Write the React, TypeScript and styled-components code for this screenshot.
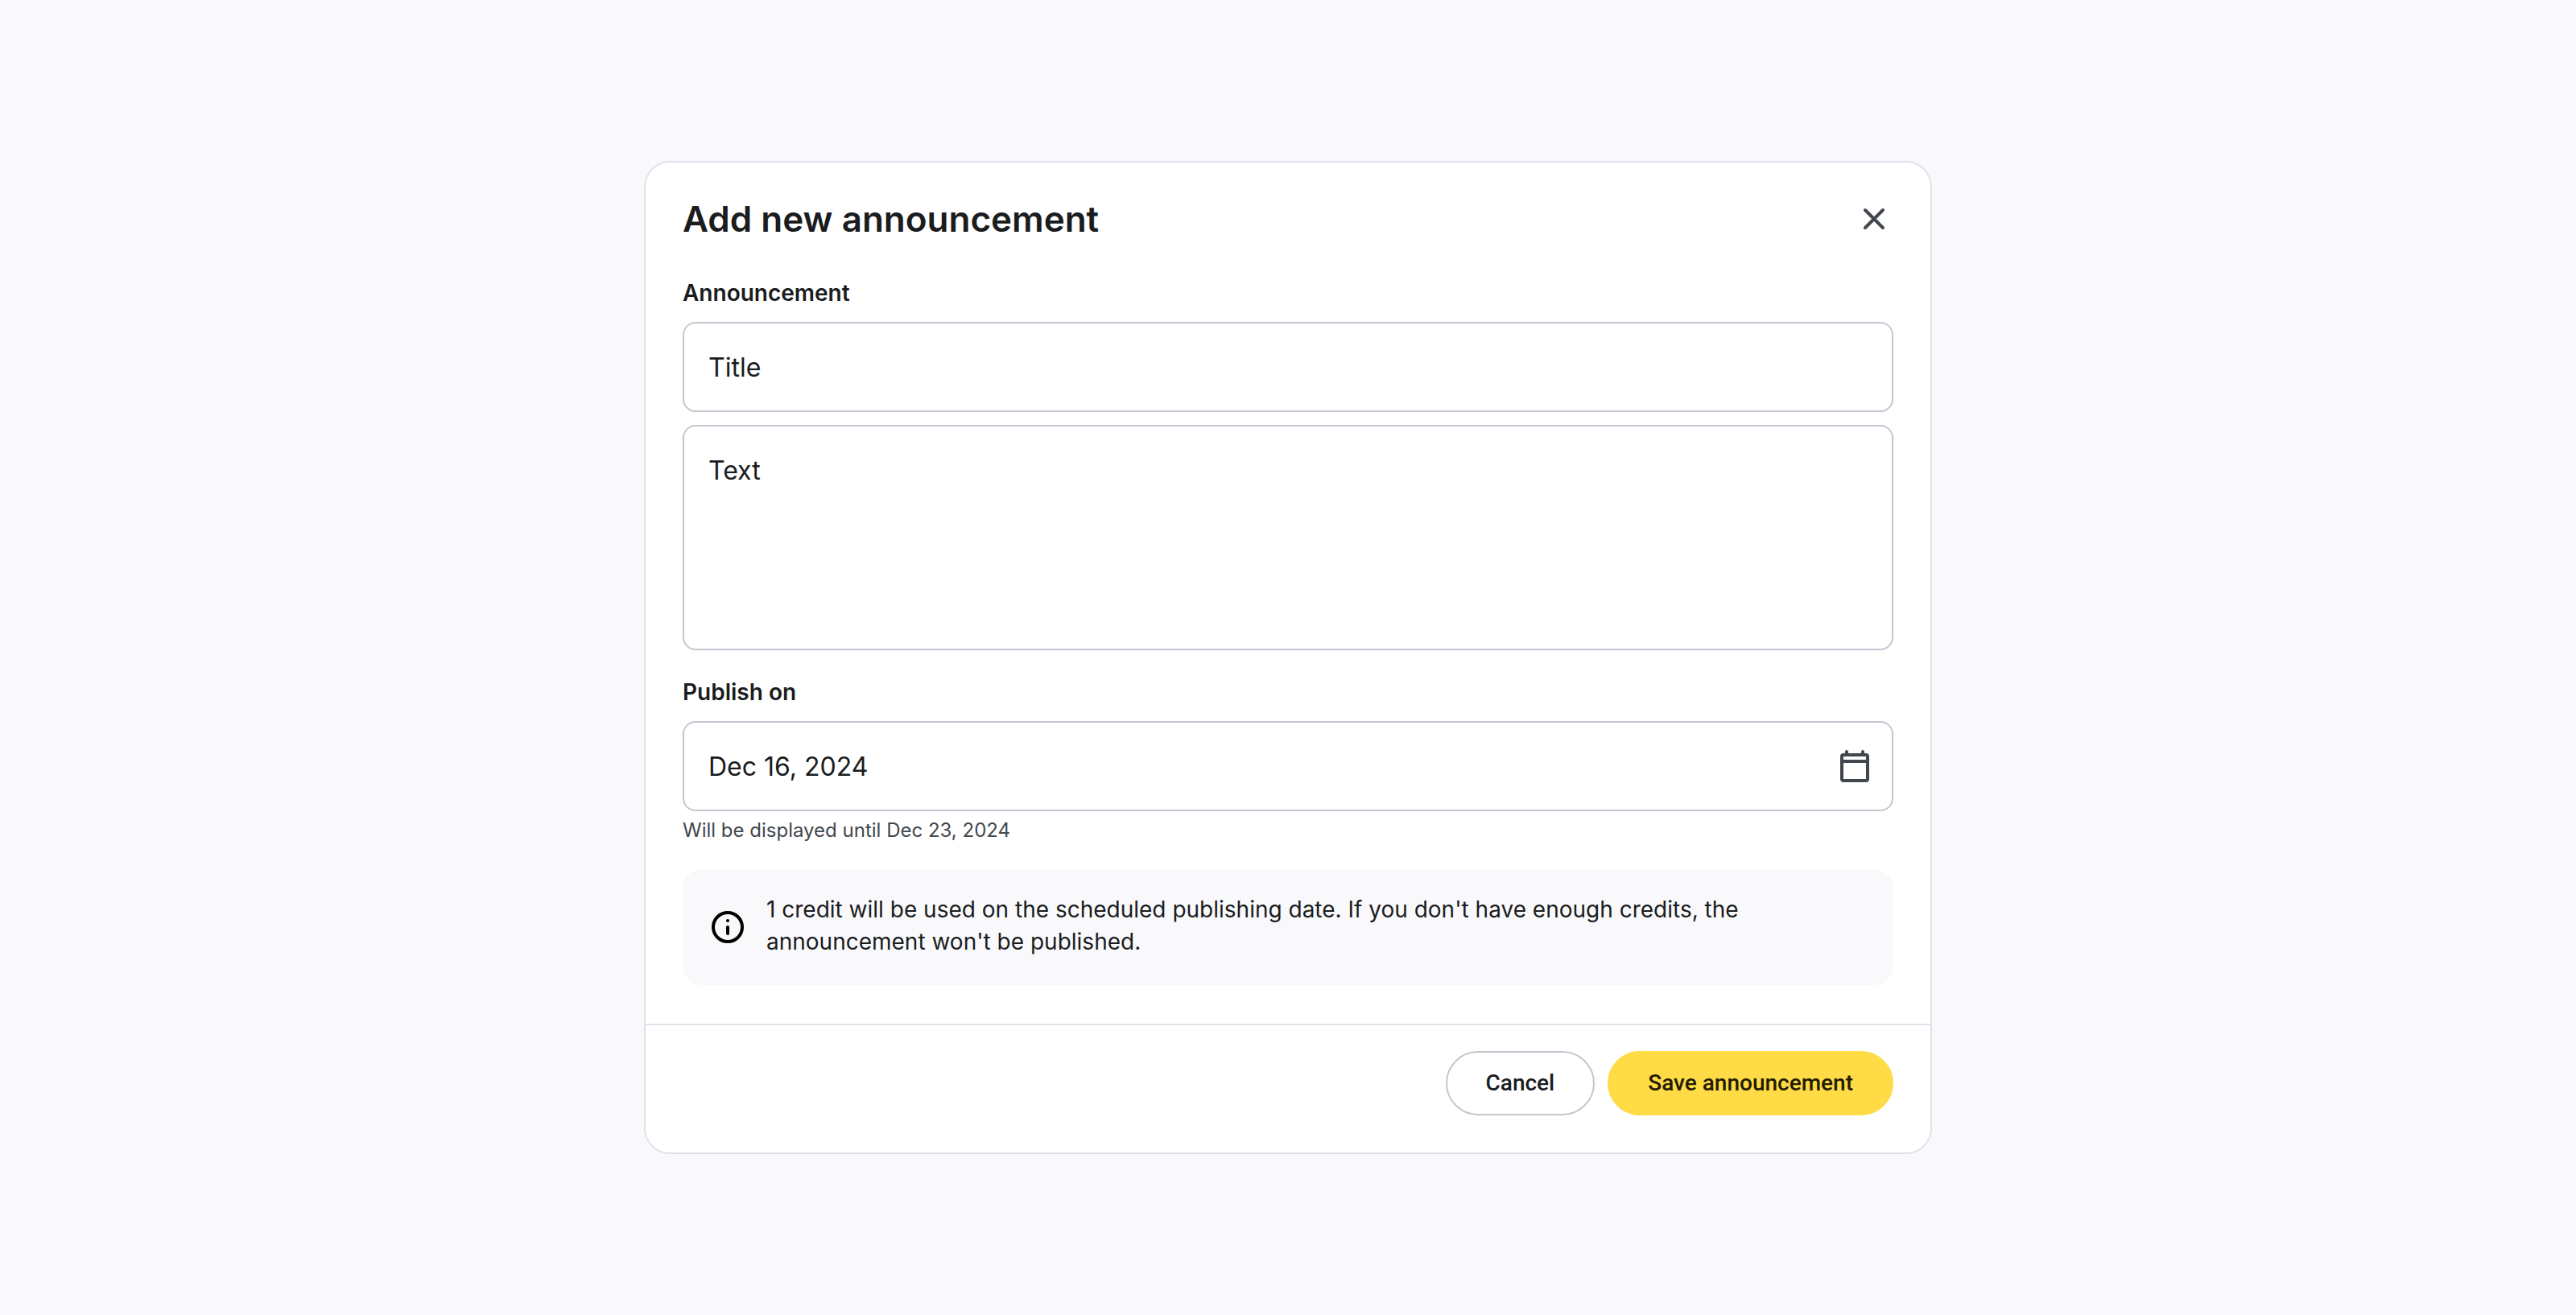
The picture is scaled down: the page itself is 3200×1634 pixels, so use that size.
import React, { useState } from "react";
import styled, { createGlobalStyle, css } from "styled-components";

const color = {
  page: "#f9f9fc",
  surface: "#ffffff",
  text: "#1a1c1e",
  textMuted: "#42474e",
  outline: "#c2c7cf",
  divider: "#dee3eb",
  primary: "#ffdb46",
  onPrimary: "#231b00",
};

const GlobalStyle = createGlobalStyle`
  *, *::before, *::after { box-sizing: border-box; }
  body {
    margin: 0;
    background: ${color.page};
    color: ${color.text};
    font-family: Inter, "Liberation Sans", sans-serif;
  }
`;

const Page = styled.main`
  min-height: 100vh;
  display: flex;
  align-items: center;
  justify-content: center;
  padding: 48px;
`;

const Dialog = styled.form`
  width: 100%;
  max-width: 1600px;
  background: ${color.surface};
  border: 2px solid ${color.divider};
  border-radius: 32px;
`;

const Header = styled.header`
  display: flex;
  align-items: center;
  justify-content: space-between;
  padding: 46px 46px 0;
`;

const Heading = styled.h1`
  margin: 0;
  font-size: 44px;
  line-height: 48px;
  font-weight: 600;
`;

const IconButton = styled.button`
  display: flex;
  padding: 0;
  border: 0;
  background: none;
  color: ${color.textMuted};
  cursor: pointer;
`;

const Body = styled.div`
  display: flex;
  flex-direction: column;
  gap: 32px;
  padding: 48px 46px;
`;

const Group = styled.div`
  display: flex;
  flex-direction: column;
`;

const Label = styled.label`
  margin-bottom: 16px;
  font-size: 28px;
  line-height: 40px;
  font-weight: 600;
`;

const fieldStyle = css`
  display: block;
  width: 100%;
  margin: 0;
  padding: 30px;
  border: 2px solid ${color.outline};
  border-radius: 16px;
  background: ${color.surface};
  color: ${color.text};
  font-family: inherit;
  font-size: 32px;
  line-height: 48px;

  &::placeholder {
    color: ${color.text};
    opacity: 1;
  }
`;

const TextField = styled.input`
  ${fieldStyle}
  height: 112px;
`;

const TextArea = styled.textarea`
  ${fieldStyle}
  height: 280px;
  margin-top: 16px;
  padding-top: 31px;
  resize: none;
`;

const DateBox = styled.div`
  display: flex;
  align-items: center;
  height: 112px;
  padding: 0 22px 0 30px;
  border: 2px solid ${color.outline};
  border-radius: 16px;
`;

const DateInput = styled.input`
  flex: 1;
  min-width: 0;
  height: 100%;
  padding: 0;
  border: 0;
  outline: 0;
  background: none;
  color: ${color.text};
  font-family: inherit;
  font-size: 32px;
  line-height: 48px;
`;

const Hint = styled.p`
  margin: 8px 0 0;
  color: ${color.textMuted};
  font-size: 24px;
  line-height: 32px;
`;

const Notice = styled.aside`
  display: flex;
  align-items: center;
  gap: 24px;
  padding: 30px 32px;
  border-radius: 24px;
  background: ${color.page};
`;

const NoticeText = styled.p`
  flex: 1;
  max-width: 1240px;
  margin: 0;
  padding-bottom: 4px;
  font-size: 28px;
  line-height: 40px;
`;

const Footer = styled.footer`
  display: flex;
  justify-content: flex-end;
  gap: 16px;
  padding: 32px 46px 46px;
  border-top: 2px solid ${color.divider};
`;

const Button = styled.button<{ $primary?: boolean }>`
  height: 80px;
  padding: 0 48px;
  border: 2px solid ${(p) => (p.$primary ? color.primary : color.outline)};
  border-radius: 40px;
  background: ${(p) => (p.$primary ? color.primary : color.surface)};
  color: ${(p) => (p.$primary ? color.onPrimary : color.text)};
  font-family: Roboto, "Liberation Sans", sans-serif;
  font-size: 28px;
  line-height: 40px;
  font-weight: 500;
  cursor: pointer;
`;

const Icon = styled.svg`
  flex: none;
  display: block;
  width: 48px;
  height: 48px;
  fill: none;
  stroke: currentColor;
  stroke-width: 4;
`;

const NoticeIcon = styled(Icon)`
  color: #000000;
`;

const CloseIcon = () => (
  <Icon viewBox="0 0 48 48" strokeLinecap="round" aria-hidden="true">
    <path d="M13 13 35 35M35 13 13 35" />
  </Icon>
);

const CalendarIcon = () => (
  <Icon viewBox="0 0 48 48" aria-hidden="true">
    <rect x="8" y="10" width="32" height="32" rx="2" />
    <path d="M8 18H40" />
    <path d="M14 10V6M34 10V6" strokeLinecap="round" />
  </Icon>
);

const InfoIcon = () => (
  <NoticeIcon viewBox="0 0 48 48" aria-hidden="true">
    <circle cx="24" cy="24" r="18" />
    <path d="M24 24V32" strokeLinecap="round" />
    <circle cx="24" cy="16" r="2" fill="currentColor" stroke="none" />
  </NoticeIcon>
);

export default function App() {
  const [title, setTitle] = useState("");
  const [text, setText] = useState("");
  const [date, setDate] = useState("Dec 16, 2024");

  return (
    <>
      <GlobalStyle />
      <Page>
        <Dialog aria-labelledby="dialog-heading" onSubmit={(e) => e.preventDefault()}>
          <Header>
            <Heading id="dialog-heading">Add new announcement</Heading>
            <IconButton type="button" aria-label="Close">
              <CloseIcon />
            </IconButton>
          </Header>
          <Body>
            <Group>
              <Label htmlFor="title">Announcement</Label>
              <TextField
                id="title"
                placeholder="Title"
                value={title}
                onChange={(e) => setTitle(e.target.value)}
              />
              <TextArea
                aria-label="Text"
                placeholder="Text"
                value={text}
                onChange={(e) => setText(e.target.value)}
              />
            </Group>
            <Group>
              <Label htmlFor="publish">Publish on</Label>
              <DateBox>
                <DateInput
                  id="publish"
                  aria-describedby="publish-hint"
                  value={date}
                  onChange={(e) => setDate(e.target.value)}
                />
                <IconButton type="button" aria-label="Choose date">
                  <CalendarIcon />
                </IconButton>
              </DateBox>
              <Hint id="publish-hint">Will be displayed until Dec 23, 2024</Hint>
            </Group>
            <Notice>
              <InfoIcon />
              <NoticeText>
                1 credit will be used on the scheduled publishing date. If you don't have enough
                credits, the announcement won't be published.
              </NoticeText>
            </Notice>
          </Body>
          <Footer>
            <Button type="button">Cancel</Button>
            <Button type="submit" $primary>
              Save announcement
            </Button>
          </Footer>
        </Dialog>
      </Page>
    </>
  );
}
